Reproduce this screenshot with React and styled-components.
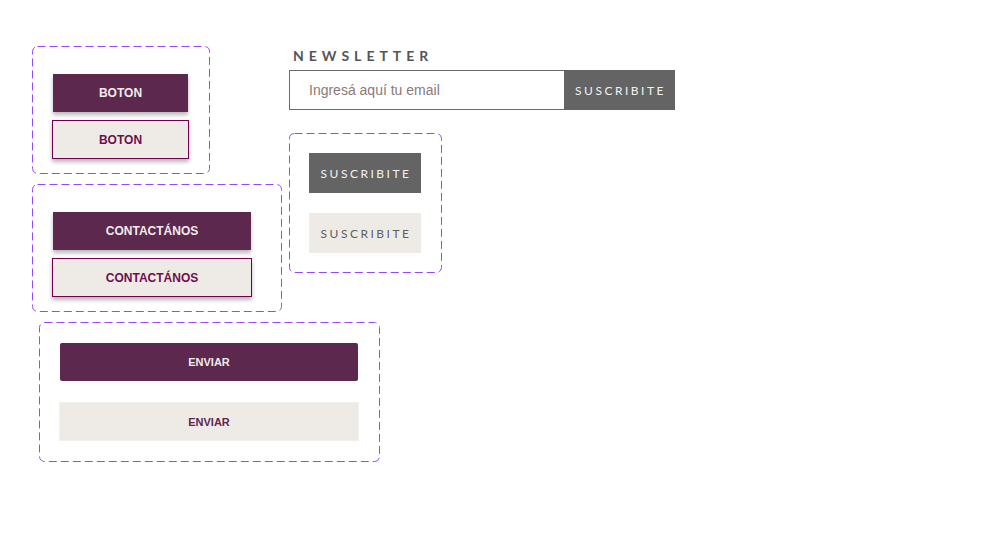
import React from "react";
import styled, { createGlobalStyle } from "styled-components";

const GlobalStyle = createGlobalStyle`
  body {
    margin: 0;
    background: #ffffff;
    font-family: "Liberation Sans", Arial, sans-serif;
  }
`;

// Figma-style dashed outline around each variant set
const dashedOutline = `url("data:image/svg+xml,%3Csvg xmlns='http://www.w3.org/2000/svg'%3E%3Crect x='0.5' y='0.5' width='calc(100%25 - 1px)' height='calc(100%25 - 1px)' rx='5' ry='5' fill='none' stroke='%239747FF' stroke-width='1' stroke-dasharray='8 4'/%3E%3C/svg%3E")`;

const Canvas = styled.div`
  display: grid;
  grid-template-columns: 257px auto;
  row-gap: 10px;
  padding: 46px 0 0 32px;
`;

const Column = styled.div`
  display: flex;
  flex-direction: column;
  gap: 10px;
`;

const VariantSet = styled.div`
  box-sizing: border-box;
  width: ${(p) => p.$w}px;
  height: ${(p) => p.$h}px;
  padding: ${(p) => p.$pad || "28px 0 0 21px"};
  display: flex;
  flex-direction: column;
  align-items: flex-start;
  gap: ${(p) => p.$gap || 8}px;
  background-image: ${dashedOutline};
  background-repeat: no-repeat;
  background-size: 100% 100%;
  margin-left: ${(p) => p.$ml || 0}px;
`;

const Button = styled.button`
  box-sizing: border-box;
  width: ${(p) => p.$w}px;
  height: ${(p) => p.$h || 38}px;
  border: none;
  padding: 0;
  font-family: "Liberation Sans", Arial, sans-serif;
  font-weight: 700;
  font-size: ${(p) => p.$fs || 12}px;
  text-transform: uppercase;
  cursor: pointer;
  background: #5c284e;
  color: #f1ece8;
  border-radius: ${(p) => p.$r || 0}px;
  box-shadow: ${(p) => (p.$shadow ? "0 3px 4px rgba(0, 0, 0, 0.28)" : "none")};
`;

const OutlineButton = styled(Button)`
  background: #eeebe7;
  color: #6d0f4d;
  border: 1px solid #72004f;
  margin-left: -1px;
`;

const SoftButton = styled(Button)`
  background: #eeebe7;
  color: #5c284e;
  border: 1px solid #f2f0ed;
  margin-left: -1px;
`;

const Newsletter = styled.div`
  display: flex;
  flex-direction: column;
`;

const Label = styled.h3`
  margin: 0 0 0 4px;
  font-family: Lato, "Open Sans", sans-serif;
  font-weight: 700;
  font-size: 14px;
  line-height: 20px;
  letter-spacing: 5px;
  color: #555555;
  height: 24px;
`;

const Form = styled.form`
  display: flex;
  height: 40px;
  margin-bottom: 13px;
`;

const EmailInput = styled.input`
  box-sizing: border-box;
  width: 275px;
  height: 40px;
  border: 1px solid #6b6b6b;
  border-right: none;
  padding: 0 0 0 19px;
  font-family: "Liberation Sans", Arial, sans-serif;
  font-size: 14px;
  outline: none;
  &::placeholder {
    color: #8b7a78;
  }
`;

const GreyButton = styled.button`
  box-sizing: border-box;
  width: ${(p) => p.$w}px;
  height: 40px;
  border: none;
  padding: 0 0 0 2px;
  font-family: Lato, "Open Sans", sans-serif;
  font-size: 12px;
  letter-spacing: 2.5px;
  background: ${(p) => (p.$light ? "#eeebe7" : "#646464")};
  color: ${(p) => (p.$light ? "#5e5e5e" : "#f2f2f2")};
  cursor: pointer;
`;

const Wide = styled.div`
  grid-column: 1 / span 2;
`;

export default function App() {
  return (
    <>
      <GlobalStyle />
      <Canvas>
        <Column>
          <VariantSet $w={178} $h={128} $pad="28px 0 0 21px">
            <Button $w={135} $shadow>Boton</Button>
            <OutlineButton $w={137} $h={39} $shadow>Boton</OutlineButton>
          </VariantSet>
          <VariantSet $w={250} $h={128} $pad="28px 0 0 21px">
            <Button $w={198} $shadow>Contactános</Button>
            <OutlineButton $w={200} $h={39} $shadow>Contactános</OutlineButton>
          </VariantSet>
        </Column>
        <Column>
          <Newsletter>
            <Label>NEWSLETTER</Label>
            <Form onSubmit={(e) => e.preventDefault()}>
              <EmailInput placeholder="Ingresá aquí tu email" />
              <GreyButton $w={111}>SUSCRIBITE</GreyButton>
            </Form>
          </Newsletter>
          <VariantSet $w={153} $h={140} $pad="20px 0 0 20px" $gap={20}>
            <GreyButton $w={112}>SUSCRIBITE</GreyButton>
            <GreyButton $w={112} $light>SUSCRIBITE</GreyButton>
          </VariantSet>
        </Column>
        <Wide>
          <VariantSet $w={341} $h={140} $pad="21px 0 0 21px" $gap={21} $ml={7}>
            <Button $w={298} $fs={11} $r={2}>Enviar</Button>
            <SoftButton $w={300} $h={39} $fs={11}>Enviar</SoftButton>
          </VariantSet>
        </Wide>
      </Canvas>
    </>
  );
}
